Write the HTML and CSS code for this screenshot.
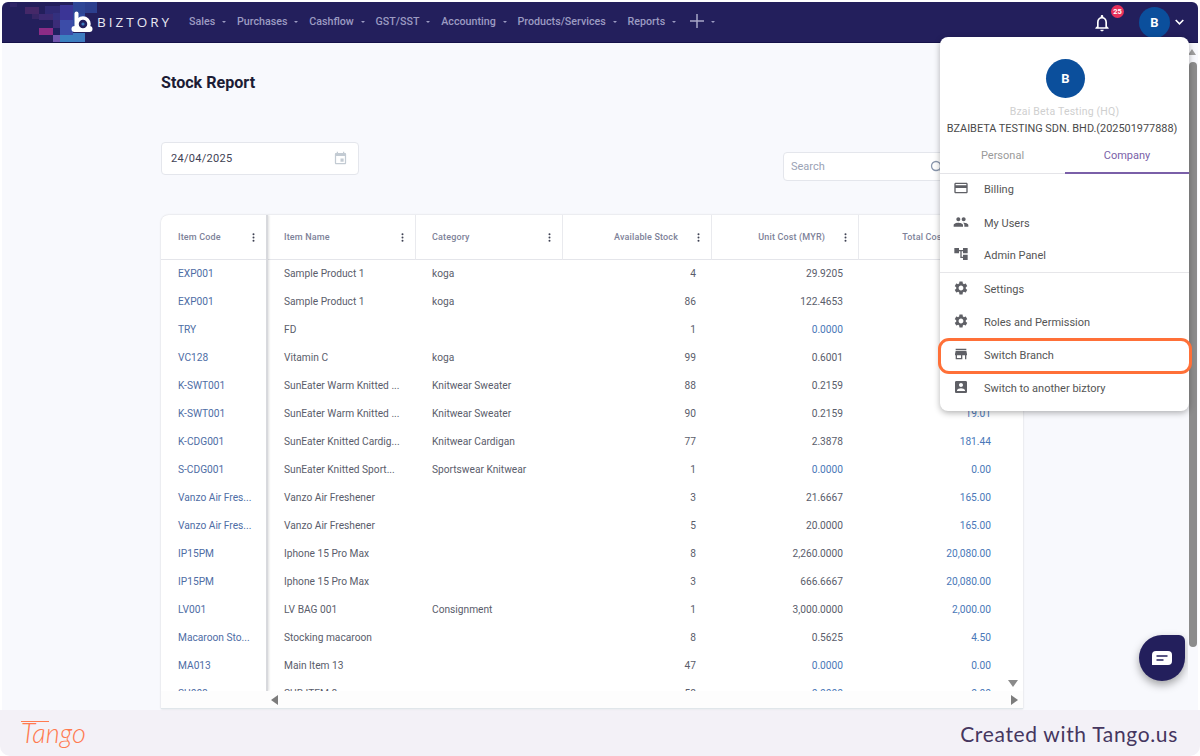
FILE: index.html
```html
<!DOCTYPE html>
<html lang="en">
<head>
<meta charset="utf-8">
<title>Stock Report</title>
<link rel="stylesheet" href="styles.css">
</head>
<body>
<svg class="sprite" aria-hidden="true">
  <symbol id="i-card" viewBox="0 0 24 24"><path d="M20 4H4c-1.11 0-1.99.89-1.99 2L2 18c0 1.11.89 2 2 2h16c1.11 0 2-.89 2-2V6c0-1.11-.89-2-2-2zm0 14H4v-6h16v6zm0-10H4V6h16v2z"/></symbol>
  <symbol id="i-people" viewBox="0 0 24 24"><path d="M16 11c1.66 0 2.99-1.34 2.99-3S17.66 5 16 5c-1.66 0-3 1.34-3 3s1.34 3 3 3zm-8 0c1.66 0 2.99-1.34 2.99-3S9.66 5 8 5C6.34 5 5 6.34 5 8s1.34 3 3 3zm0 2c-2.33 0-7 1.17-7 3.5V19h14v-2.5c0-2.33-4.67-3.5-7-3.5zm8 0c-.29 0-.62.02-.97.05 1.16.84 1.97 1.97 1.97 3.45V19h6v-2.5c0-2.33-4.67-3.5-7-3.5z"/></symbol>
  <symbol id="i-tree" viewBox="0 0 24 24"><path d="M22 11V3h-7v3H9V3H2v8h7V8h2v10h4v3h7v-8h-7v3h-2V8h2v3z"/></symbol>
  <symbol id="i-gear" viewBox="0 0 24 24"><path d="M19.14 12.94c.04-.3.06-.61.06-.94 0-.32-.02-.64-.07-.94l2.03-1.58c.18-.14.23-.41.12-.61l-1.92-3.32c-.12-.22-.37-.29-.59-.22l-2.39.96c-.5-.38-1.03-.7-1.62-.94l-.36-2.54c-.04-.24-.24-.41-.48-.41h-3.84c-.24 0-.43.17-.47.41l-.36 2.54c-.59.24-1.13.57-1.62.94l-2.39-.96c-.22-.08-.47 0-.59.22L2.74 8.87c-.12.21-.08.47.12.61l2.03 1.58c-.05.3-.09.63-.09.94s.02.64.07.94l-2.03 1.58c-.18.14-.23.41-.12.61l1.92 3.32c.12.22.37.29.59.22l2.39-.96c.5.38 1.03.7 1.62.94l.36 2.54c.05.24.24.41.48.41h3.84c.24 0 .44-.17.47-.41l.36-2.54c.59-.24 1.13-.56 1.62-.94l2.39.96c.22.08.47 0 .59-.22l1.92-3.32c.12-.22.07-.47-.12-.61l-2.01-1.58zM12 15.6c-1.98 0-3.6-1.62-3.6-3.6s1.62-3.6 3.6-3.6 3.6 1.62 3.6 3.6-1.62 3.6-3.6 3.6z"/></symbol>
  <symbol id="i-store" viewBox="0 0 24 24"><path d="M20 4H4v2h16V4zm1 10v-2l-1-5H4l-1 5v2h1v6h10v-6h4v6h2v-6h1zm-9 4H6v-4h6v4z"/></symbol>
  <symbol id="i-box" viewBox="0 0 24 24"><path d="M3 5v14c0 1.1.89 2 2 2h14c1.1 0 2-.9 2-2V5c0-1.1-.9-2-2-2H5c-1.11 0-2 .9-2 2zm12 4c0 1.66-1.34 3-3 3s-3-1.34-3-3 1.34-3 3-3 3 1.34 3 3zm-9 8c0-2 4-3.1 6-3.1s6 1.1 6 3.1v1H6v-1z"/></symbol>
  <symbol id="i-dots" viewBox="0 0 3 9"><circle cx="1.500" cy="1.200" r="1"/><circle cx="1.500" cy="4.500" r="1"/><circle cx="1.500" cy="7.800" r="1"/></symbol>
</svg>

<div class="app">
  <header class="nav">
    <svg class="mosaic" width="100" height="40" viewBox="0 0 100 40" aria-hidden="true">
      <rect x="8" y="1" width="7" height="4" fill="#2f2566"/>
      <rect x="23" y="5" width="14" height="7" fill="#452868"/>
      <rect x="30" y="12" width="8" height="5" fill="#372665"/>
      <rect x="37" y="12" width="14" height="6" fill="#3c2a72"/>
      <rect x="43" y="4" width="15" height="8" fill="#2f2a74"/>
      <rect x="51" y="11" width="7" height="7" fill="#33307e"/>
      <rect x="51" y="18" width="7" height="8" fill="#3b2c78"/>
      <rect x="37" y="26" width="14" height="7" fill="#8c2c86"/>
      <rect x="51" y="26" width="7" height="7" fill="#1f2060"/>
      <rect x="51" y="33" width="7" height="7" fill="#7055ad"/>
      <rect x="58" y="3" width="13" height="15" fill="#3b3596"/>
      <rect x="58" y="18" width="13" height="15" fill="#3c4ca8"/>
      <rect x="58" y="33" width="13" height="7" fill="#3a80c0"/>
      <rect x="71" y="0" width="12" height="12" fill="#2e4696"/>
      <rect x="71" y="12" width="12" height="12" fill="#2f4a9f"/>
      <rect x="71" y="31" width="12" height="9" fill="#3e7cc0"/>
      <rect x="83" y="0" width="12" height="11" fill="#2c3f8e"/>
    </svg>
    <div class="brand">
      <svg class="brand-mark" width="22" height="23" viewBox="0 0 22 23" aria-hidden="true">
        <rect x="3.500" y="0.500" width="4" height="16" rx="2" fill="#fff"/>
        <circle cx="3.500" cy="18" r="3" fill="#fff"/>
        <circle cx="18.500" cy="18" r="3" fill="#fff"/>
        <rect x="3" y="16" width="16" height="5" fill="#fff"/>
        <circle cx="12" cy="13" r="6" fill="#231f5c" stroke="#fff" stroke-width="3.500"/>
        <circle cx="12" cy="13" r="1.600" fill="#3e7cc0"/>
      </svg>
      <span class="brand-name">BIZTORY</span>
    </div>
    <nav class="menu-bar">
      <a class="nav-item">Sales</a>
      <a class="nav-item">Purchases</a>
      <a class="nav-item">Cashflow</a>
      <a class="nav-item">GST/SST</a>
      <a class="nav-item">Accounting</a>
      <a class="nav-item">Products/Services</a>
      <a class="nav-item">Reports</a>
      <a class="nav-item nav-plus"><svg width="14" height="14" viewBox="0 0 14 14" aria-hidden="true"><path d="M7 0v14M0 7h14" stroke="#a9a8c8" stroke-width="1.5"/></svg></a>
    </nav>
    <div class="nav-right">
      <div class="bell">
        <svg width="20" height="20" viewBox="0 0 24 24" aria-hidden="true"><path fill="#fff" d="M12 22c1.1 0 2-.9 2-2h-4c0 1.1.89 2 2 2zm6-6v-5c0-3.07-1.64-5.64-4.5-6.32V4c0-.83-.67-1.5-1.5-1.5s-1.5.67-1.5 1.5v.68C7.63 5.36 6 7.92 6 11v5l-2 2v1h16v-1l-2-2zm-2 1H8v-6c0-2.48 1.51-4.5 4-4.5s4 2.02 4 4.5v6z"/></svg>
        <span class="badge">25</span>
      </div>
      <div class="avatar">B</div>
      <svg class="chev" width="9" height="6" viewBox="0 0 9 6" aria-hidden="true"><path d="M.7 1l3.800 3.800L8.300 1" stroke="#fff" stroke-width="1.600" fill="none"/></svg>
    </div>
  </header>

  <div class="stage">
    <main class="content">
      <h1 class="title">Stock Report</h1>
      <div class="toolbar">
        <div class="date-field">
          <span>24/04/2025</span>
          <svg width="15" height="15" viewBox="0 0 24 24" aria-hidden="true"><path fill="#c3cbd3" d="M17 12h-5v5h5v-5zM16 1v2H8V1H6v2H5c-1.11 0-1.99.9-1.99 2L3 19c0 1.1.89 2 2 2h14c1.1 0 2-.9 2-2V5c0-1.1-.9-2-2-2h-1V1h-2zm3 18H5V8h14v11z"/></svg>
        </div>
        <div class="search-field">
          <span>Search</span>
          <svg width="14" height="14" viewBox="0 0 14 14" aria-hidden="true"><circle cx="6" cy="6" r="4.500" fill="none" stroke="#8a97ad" stroke-width="1.300"/><path d="M9.500 9.500L13 13" stroke="#8a97ad" stroke-width="1.300"/></svg>
        </div>
      </div>

      <section class="table">
        <div class="table-body">
          <div class="pin">
            <div class="head-cell"><span>Item Code</span><svg class="dots"><use href="#i-dots"/></svg></div>
            <div class="cell code">EXP001</div>
            <div class="cell code">EXP001</div>
            <div class="cell code">TRY</div>
            <div class="cell code">VC128</div>
            <div class="cell code">K-SWT001</div>
            <div class="cell code">K-SWT001</div>
            <div class="cell code">K-CDG001</div>
            <div class="cell code">S-CDG001</div>
            <div class="cell code">Vanzo Air Fres...</div>
            <div class="cell code">Vanzo Air Fres...</div>
            <div class="cell code">IP15PM</div>
            <div class="cell code">IP15PM</div>
            <div class="cell code">LV001</div>
            <div class="cell code">Macaroon Sto...</div>
            <div class="cell code">MA013</div>
            <div class="cell code">SU008</div>
          </div>
          <div class="grid">
            <div class="head-cell"><span>Item Name</span><svg class="dots"><use href="#i-dots"/></svg></div>
            <div class="head-cell"><span>Category</span><svg class="dots"><use href="#i-dots"/></svg></div>
            <div class="head-cell num"><span>Available Stock</span><svg class="dots"><use href="#i-dots"/></svg></div>
            <div class="head-cell num"><span>Unit Cost (MYR)</span><svg class="dots"><use href="#i-dots"/></svg></div>
            <div class="head-cell num"><span>Total Cost (MYR)</span><svg class="dots"><use href="#i-dots"/></svg></div>

            <div class="cell">Sample Product 1</div><div class="cell">koga</div><div class="cell n">4</div><div class="cell n">29.9205</div><div class="cell n link">119.68</div>
            <div class="cell">Sample Product 1</div><div class="cell">koga</div><div class="cell n">86</div><div class="cell n">122.4653</div><div class="cell n link">10,532.02</div>
            <div class="cell">FD</div><div class="cell"></div><div class="cell n">1</div><div class="cell n link">0.0000</div><div class="cell n link">0.00</div>
            <div class="cell">Vitamin C</div><div class="cell">koga</div><div class="cell n">99</div><div class="cell n">0.6001</div><div class="cell n link">59.41</div>
            <div class="cell">SunEater Warm Knitted ...</div><div class="cell">Knitwear Sweater</div><div class="cell n">88</div><div class="cell n">0.2159</div><div class="cell n link">19.00</div>
            <div class="cell">SunEater Warm Knitted ...</div><div class="cell">Knitwear Sweater</div><div class="cell n">90</div><div class="cell n">0.2159</div><div class="cell n link">19.01</div>
            <div class="cell">SunEater Knitted Cardig...</div><div class="cell">Knitwear Cardigan</div><div class="cell n">77</div><div class="cell n">2.3878</div><div class="cell n link">181.44</div>
            <div class="cell">SunEater Knitted Sport...</div><div class="cell">Sportswear Knitwear</div><div class="cell n">1</div><div class="cell n link">0.0000</div><div class="cell n link">0.00</div>
            <div class="cell">Vanzo Air Freshener</div><div class="cell"></div><div class="cell n">3</div><div class="cell n">21.6667</div><div class="cell n link">165.00</div>
            <div class="cell">Vanzo Air Freshener</div><div class="cell"></div><div class="cell n">5</div><div class="cell n">20.0000</div><div class="cell n link">165.00</div>
            <div class="cell">Iphone 15 Pro Max</div><div class="cell"></div><div class="cell n">8</div><div class="cell n">2,260.0000</div><div class="cell n link">20,080.00</div>
            <div class="cell">Iphone 15 Pro Max</div><div class="cell"></div><div class="cell n">3</div><div class="cell n">666.6667</div><div class="cell n link">20,080.00</div>
            <div class="cell">LV BAG 001</div><div class="cell">Consignment</div><div class="cell n">1</div><div class="cell n">3,000.0000</div><div class="cell n link">2,000.00</div>
            <div class="cell">Stocking macaroon</div><div class="cell"></div><div class="cell n">8</div><div class="cell n">0.5625</div><div class="cell n link">4.50</div>
            <div class="cell">Main Item 13</div><div class="cell"></div><div class="cell n">47</div><div class="cell n link">0.0000</div><div class="cell n link">0.00</div>
            <div class="cell">SUB ITEM 8</div><div class="cell"></div><div class="cell n">58</div><div class="cell n link">0.0000</div><div class="cell n link">0.00</div>
          </div>
          <div class="v-gutter"><span class="arrow-down"></span></div>
        </div>
        <div class="h-scroll">
          <span class="arrow-left"></span>
          <span class="arrow-right"></span>
        </div>
      </section>

      <button class="chat" aria-label="Chat">
        <svg width="20" height="14" viewBox="0 0 20 14" aria-hidden="true"><path fill="#fff" d="M4 0h12a4 4 0 0 1 4 4v6a4 4 0 0 1-4 4H0V4a4 4 0 0 1 4-4z"/><path d="M4.500 5h11M4.500 9h7" stroke="#231f5c" stroke-width="1.600"/></svg>
      </button>
    </main>

    <div class="page-scroll"><span class="arrow-up"></span><span class="thumb"></span></div>

    <aside class="dropdown">
      <div class="profile">
        <div class="avatar avatar-lg">B</div>
        <div class="branch">Bzai Beta Testing (HQ)</div>
        <div class="company">BZAIBETA TESTING SDN. BHD.(202501977888)</div>
      </div>
      <div class="tabs">
        <div class="tab">Personal</div>
        <div class="tab tab-on">Company</div>
      </div>
      <ul class="group">
        <li class="item item-first"><svg><use href="#i-card"/></svg><span>Billing</span></li>
        <li class="item"><svg><use href="#i-people"/></svg><span>My Users</span></li>
        <li class="item"><svg><use href="#i-tree"/></svg><span>Admin Panel</span></li>
      </ul>
      <ul class="group group-last">
        <li class="item"><svg><use href="#i-gear"/></svg><span>Settings</span></li>
        <li class="item"><svg><use href="#i-gear"/></svg><span>Roles and Permission</span></li>
        <li class="item"><svg><use href="#i-store"/></svg><span>Switch Branch</span></li>
        <li class="item"><svg><use href="#i-box"/></svg><span>Switch to another biztory</span></li>
      </ul>
      <div class="highlight"></div>
    </aside>
  </div>

  <footer class="footer">
    <span class="tango">Tango</span>
    <span class="credit">Created with Tango.us</span>
  </footer>
</div>
</body>
</html>
```

FILE: styles.css
```css
* { box-sizing: border-box; }
html, body { margin: 0; height: 100%; }
body {
  background: #fff;
  font-family: Roboto, "Liberation Sans", sans-serif;
  overflow: hidden;
}
.sprite { display: none; }
.app {
  width: 1200px;
  height: 756px;
  padding: 2px 0 0 2px;
  display: flex;
  flex-direction: column;
}

/* nav */
.nav {
  position: relative;
  flex: none;
  height: 41px;
  margin-right: 2px;
  background: #231f5c;
  border-bottom: 1px solid #15124a;
  border-radius: 6px 6px 0 0;
  display: flex;
  align-items: center;
  overflow: hidden;
}
.mosaic { position: absolute; left: 0; top: 0; }
.brand {
  position: relative;
  display: flex;
  align-items: center;
  margin-left: 69px;
  width: 118px;
  gap: 4px;
}
.brand-name {
  color: #e9e9f3;
  font-family: "Open Sans", sans-serif;
  font-size: 13.500px;
  font-weight: 500;
  letter-spacing: 3px;
}
.menu-bar { display: flex; align-items: center; margin-top: -2px; }
.nav-item {
  display: flex;
  align-items: center;
  color: #9c9bc2;
  font-size: 10.700px;
  font-weight: 500;
  margin-right: 10.800px;
}
.nav-item::after {
  content: "";
  margin-left: 7px;
  margin-top: 2px;
  border: 2px solid transparent;
  border-top: 2.500px solid #9c9bc2;
  border-bottom: 0;
}
.nav-plus { margin-left: 3px; }
.nav-plus svg { display: block; }
.nav-right {
  margin-left: auto;
  display: flex;
  align-items: center;
  margin-right: 14px;
}
.bell { position: relative; width: 20px; height: 20px; margin-right: 27px; margin-top: 2px; }
.bell svg { display: block; }
.badge {
  position: absolute;
  left: 19px;
  top: -8px;
  width: 13px;
  height: 13px;
  border-radius: 50%;
  background: #e8315b;
  color: #fff;
  font-size: 7.500px;
  font-weight: 700;
  line-height: 13px;
  text-align: center;
}
.avatar {
  width: 31px;
  height: 31px;
  border-radius: 50%;
  background: #0b4f9c;
  color: #fff;
  font-size: 13px;
  font-weight: 700;
  display: flex;
  align-items: center;
  justify-content: center;
}
.chev { margin-left: 5px; }

/* stage */
.stage {
  position: relative;
  flex: 1;
  display: flex;
  min-height: 0;
}
.content {
  position: relative;
  flex: 1;
  background: #f8f9fd;
  padding: 29px 0 0 159px;
}
.title {
  margin: 0;
  font-size: 16.100px;
  font-weight: 700;
  line-height: 22px;
  color: #1c1c35;
}
.toolbar {
  display: flex;
  align-items: flex-start;
  width: 862px;
  margin-top: 48px;
  justify-content: space-between;
}
.date-field, .search-field {
  background: #fff;
  border: 1px solid #e4e6ec;
  border-radius: 4px;
  display: flex;
  align-items: center;
  justify-content: space-between;
  font-size: 11px;
}
.date-field {
  width: 198px;
  height: 33px;
  padding: 0 10px 0 9px;
  color: #3f4254;
  letter-spacing: .3px;
}
.search-field {
  width: 240px;
  height: 29px;
  margin-top: 10px;
  padding: 0 78px 0 7px;
  color: #9aa2b5;
}

/* table */
.table {
  width: 862px;
  height: 494px;
  margin-top: 34px;
  background: #fff;
  border-radius: 8px 8px 0 0;
  box-shadow: 0 0 2px rgba(0,0,0,.18);
  display: flex;
  flex-direction: column;
  overflow: hidden;
}
.table-body { flex: 1; display: flex; min-height: 0; overflow: hidden; }
.pin {
  flex: none;
  width: 107px;
  border-right: 2px solid #d8d9dd;
  box-shadow: 1px 0 2px rgba(0,0,0,.12);
  position: relative;
  z-index: 1;
  background: #fff;
}
.grid {
  flex: none;
  width: 739px;
  display: grid;
  grid-template-columns: 148px 147px 149px 147px 148px;
  grid-auto-rows: 28px;
  grid-template-rows: 45px;
}
.head-cell {
  height: 45px;
  display: flex;
  align-items: center;
  justify-content: space-between;
  padding: 0 11px 0 17px;
  border-right: 1px solid #e9eaee;
  border-bottom: 1px solid #e4e5ea;
  font-size: 9px;
  font-weight: 500;
  letter-spacing: .15px;
  color: #7e8299;
}
.pin .head-cell { border-right: 0; }
.grid .head-cell { padding-left: 16px; }
.head-cell.num { justify-content: flex-end; gap: 19px; }
.dots { width: 3px; height: 9px; fill: #3f4254; flex: none; }
.cell {
  height: 28px;
  line-height: 28px;
  padding: 0 16px;
  font-size: 10.200px;
  color: #5a5d6b;
  white-space: nowrap;
  overflow: hidden;
}
.pin .cell { padding-left: 17px; }
.code { color: #4e6da5; }
.n { text-align: right; padding-right: 16px; }
.link { color: #4a78b8; }
.v-gutter {
  position: relative;
  flex: 1;
  background: #fff;
}
.arrow-down {
  position: absolute;
  left: 1px;
  top: 465px;
  border: 5px solid transparent;
  border-top: 7px solid #8a8a8a;
  border-bottom: 0;
}
.h-scroll {
  flex: none;
  height: 18px;
  background: #fdfdfd;
  border-bottom: 1px solid #e0e6ea;
  display: flex;
  justify-content: space-between;
  align-items: center;
  padding: 0 5px 0 110px;
}
.arrow-left, .arrow-right { display: block; border: 5px solid transparent; }
.arrow-left { border-right: 7px solid #7c7c7c; border-left: 0; }
.arrow-right { border-left: 7px solid #7c7c7c; border-right: 0; }

/* chat */
.chat {
  position: absolute;
  left: 1137px;
  top: 592px;
  width: 46px;
  height: 46px;
  padding: 0;
  border: 0;
  background: #231f5c;
  border-radius: 50% 6px 50% 50%;
  box-shadow: 0 4px 8px rgba(0,0,0,.35);
  display: flex;
  align-items: center;
  justify-content: center;
}

/* page scrollbar */
.page-scroll {
  position: relative;
  flex: none;
  width: 10px;
  margin-right: 2px;
  background: #f8f9fd;
}
.arrow-up {
  position: absolute;
  left: 0;
  top: 6px;
  border: 4.500px solid transparent;
  border-bottom: 6px solid #a0a0a0;
  border-top: 0;
}
.thumb {
  position: absolute;
  left: 1px;
  top: 19px;
  width: 8px;
  height: 585px;
  border-radius: 4px;
  background: #8c8c8c;
}

/* dropdown */
.dropdown {
  position: absolute;
  left: 938px;
  top: -6px;
  width: 249px;
  height: 374px;
  background: #fff;
  border-radius: 8px;
  box-shadow: 0 2px 6px rgba(0,0,0,.3);
  z-index: 5;
}
.profile {
  display: flex;
  flex-direction: column;
  align-items: center;
  padding-top: 22px;
}
.avatar-lg { width: 39px; height: 39px; font-size: 13px; margin-left: 2px; }
.branch { margin-top: 7px; font-size: 10.500px; line-height: 14px; color: #cfcfcf; letter-spacing: .2px; }
.company { margin-top: 2px; margin-right: 5px; font-size: 10.900px; line-height: 16px; color: #4a4a4a; white-space: nowrap; }
.tabs {
  display: grid;
  grid-template-columns: 125px 124px;
  height: 37px;
  border-bottom: 1px solid #e4e4e8;
}
.tab {
  display: flex;
  align-items: center;
  justify-content: center;
  font-size: 11px;
  color: #9a9a9a;
}
.tab-on { color: #7a5fa8; border-bottom: 2px solid #7a5fa8; margin-bottom: -1px; padding-top: 1px; }
.group {
  list-style: none;
  margin: 0;
  padding: 0;
  border-bottom: 1px solid #e6e6e9;
}
.group-last { border-bottom: 0; }
.item {
  display: flex;
  align-items: center;
  height: 32.800px;
  padding-left: 13px;
  font-size: 11px;
  color: #555;
}
.item-first { padding-bottom: 2px; }
.item svg {
  width: 16px;
  height: 16px;
  fill: #5f6066;
  margin-right: 15px;
  margin-top: -3px;
  flex: none;
}
.highlight {
  position: absolute;
  left: -2px;
  top: 301px;
  width: 254px;
  height: 36px;
  border: 3px solid #ff7038;
  border-radius: 11px;
}

/* footer */
.footer {
  flex: none;
  height: 46px;
  margin-left: -2px;
  background: #f3f1f7;
  border-radius: 0 0 10px 10px;
  display: flex;
  align-items: center;
  justify-content: space-between;
  padding: 0 22px 0 21px;
}
.tango {
  position: relative;
  font-family: Lato, sans-serif;
  font-style: italic;
  font-weight: 300;
  font-size: 27px;
  color: #ff7a50;
  margin-bottom: 2px;
}
.tango::before {
  content: "";
  position: absolute;
  left: 0;
  top: 5px;
  width: 28px;
  height: 1px;
  background: #ff7a50;
}
.credit {
  font-family: Lato, sans-serif;
  font-size: 21px;
  letter-spacing: .66px;
  color: #45365f;
}
```
